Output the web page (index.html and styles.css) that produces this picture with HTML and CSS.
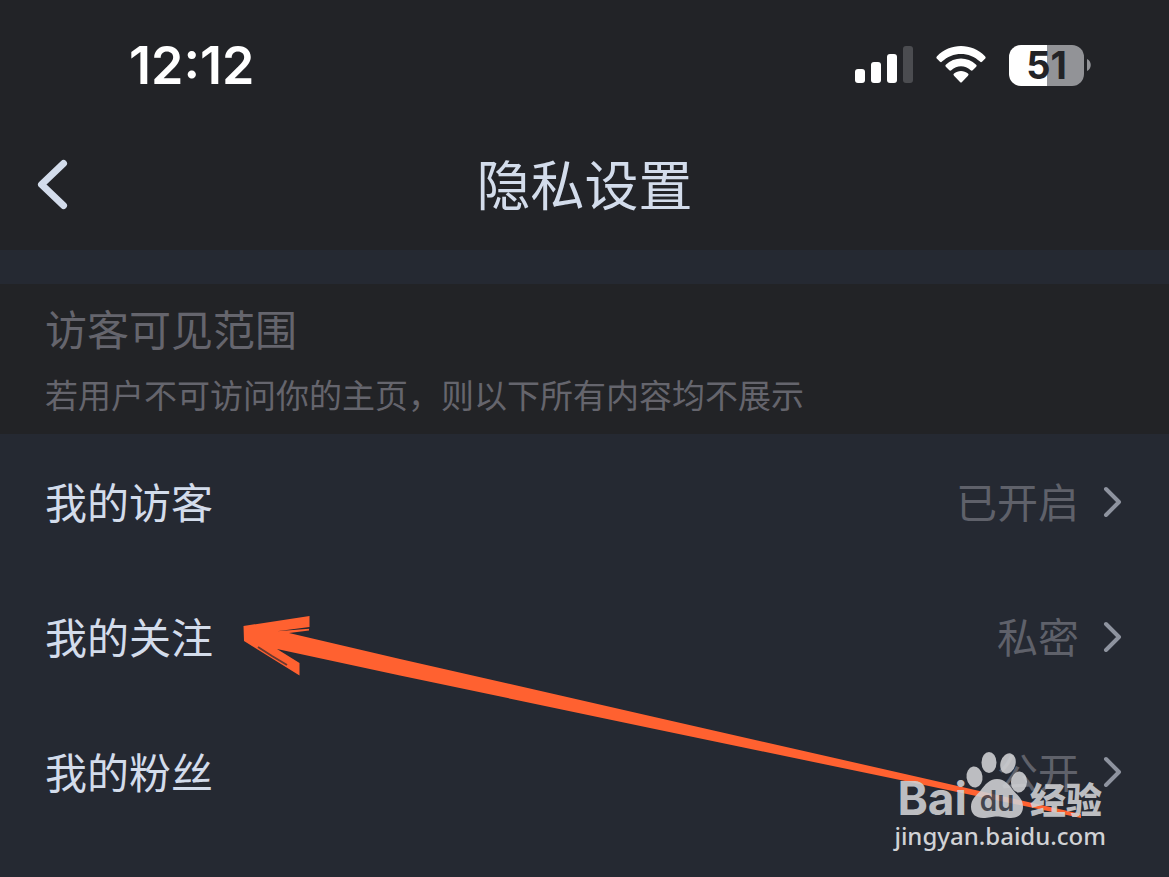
FILE: index.html
```html
<!DOCTYPE html>
<html lang="zh-CN">
<head>
<meta charset="utf-8">
<meta name="viewport" content="width=device-width, initial-scale=1">
<title>隐私设置</title>
<link rel="stylesheet" href="styles.css">
</head>
<body>
<div class="screen">
  <div class="status">
    <time class="clock">12:12</time>
    <div class="indicators">
      <svg class="signal" width="58" height="38" viewBox="0 0 58 38" role="img" aria-label="信号">
        <rect x="0" y="23" width="10" height="14" rx="3"/>
        <rect x="16" y="16" width="10" height="21" rx="3"/>
        <rect x="32" y="8" width="10" height="29" rx="3"/>
        <rect class="off" x="48" y="0" width="10" height="37" rx="3"/>
      </svg>
      <svg class="wifi" width="50" height="38" viewBox="0 0 50 38" role="img" aria-label="Wi-Fi">
        <path d="M1 10.2C14-3.3 36-3.3 49 10.2Q50.3 11.500 49 12.800L46 15.700Q45 16.600 44 15.600C33.500 5.300 16.500 5.300 6 15.600Q5 16.600 4 15.700L1 12.800Q-.3 11.500 1 10.200Z"/>
        <path d="M9.800 18.800C18.500 10.500 31.500 10.500 40.200 18.800Q41.200 19.800 40.200 20.800L36.700 24.200Q35.700 25.100 34.700 24.200C29 19 21 19 15.300 24.200Q14.300 25.100 13.300 24.200L9.800 20.800Q8.800 19.800 9.800 18.800Z"/>
        <path d="M18 27.500C22 24 28 24 32 27.500Q33.200 28.500 32 29.700L26 36Q25 37 24 36L18 29.700Q16.800 28.500 18 27.500Z"/>
      </svg>
      <div class="battery">
        <span class="level">51</span>
        <svg width="4" height="12" viewBox="0 0 4 12" aria-hidden="true"><path d="M0 0C5 2 5 10 0 12Z"/></svg>
      </div>
    </div>
  </div>

  <header class="nav">
    <button class="back" type="button" aria-label="返回">
      <svg width="32" height="52" viewBox="0 0 32 52" aria-hidden="true"><path d="M27.500 4.500 5.500 25.500 27.500 46.500"/></svg>
    </button>
    <h1 class="title">隐私设置</h1>
  </header>

  <main>
    <section class="intro">
      <h2 class="heading">访客可见范围</h2>
      <p class="note">若用户不可访问你的主页，则以下所有内容均不展示</p>
    </section>
    <div class="list">
      <button class="row" type="button">
        <span class="label">我的访客</span><span class="value">已开启</span>
        <svg class="chevron" width="20" height="32" viewBox="0 0 20 32" aria-hidden="true"><path d="M3 4 16 17 3 30"/></svg>
      </button>
      <button class="row" type="button">
        <span class="label">我的关注</span><span class="value">私密</span>
        <svg class="chevron" width="20" height="32" viewBox="0 0 20 32" aria-hidden="true"><path d="M3 4 16 17 3 30"/></svg>
      </button>
      <button class="row" type="button">
        <span class="label">我的粉丝</span><span class="value">公开</span>
        <svg class="chevron" width="20" height="32" viewBox="0 0 20 32" aria-hidden="true"><path d="M3 4 16 17 3 30"/></svg>
      </button>
      <svg class="pointer" width="840" height="206" viewBox="243 615 840 206" aria-hidden="true">
        <path d="M243.500 626 309.500 616V627L277 631.300 309 628.700V630.500L289 633 400 659 650 716 905 774 1081 814V818L905 781 650 728 400 675.500 277 649 299.500 663V675.500L244 641Z"/>
        <path class="scratch" d="M258 647 272 656 287 665"/>
      </svg>
    </div>
  </main>

  <div class="mark">
    <div class="brand">
      <span class="latin">Bai</span>
      <svg class="paw" width="60" height="66" viewBox="969 752 60 66" aria-hidden="true">
        <ellipse cx="976.500" cy="777" rx="8" ry="10.500" transform="rotate(-8 976.500 777)"/>
        <ellipse cx="991" cy="762.500" rx="7.500" ry="10.500"/>
        <ellipse cx="1010" cy="763.500" rx="7.500" ry="10.500" transform="rotate(16 1010 763.500)"/>
        <ellipse cx="1021" cy="782" rx="8" ry="10.500" transform="rotate(4 1021 782)"/>
        <path d="M999 779C1007 779 1011 785 1015 790C1020 796 1025 799 1025 807C1025 814 1020 818 1013 818C1007 818 1004 816.500 999 816.500C994 816.500 991 818 985 818C978 818 973 814 973 807C973 799 978 796 983 790C987 785 991 779 999 779Z"/>
        <text x="999" y="811" text-anchor="middle">du</text>
      </svg>
      <span class="han">经验</span>
    </div>
    <div class="site">jingyan.baidu.com</div>
  </div>
</div>
</body>
</html>
```
FILE: styles.css
```css
* { box-sizing: border-box; }

body {
  margin: 0;
  background: #252932;
  color: #d3dceb;
  font-family: "Noto Sans CJK SC", sans-serif;
  font-weight: 400;
}

button {
  border: 0;
  padding: 0;
  background: none;
  color: inherit;
  font: inherit;
  cursor: pointer;
}

h1, h2, p { margin: 0; font-weight: inherit; }

svg { display: block; flex: none; }

.screen {
  position: relative;
  min-height: 100vh;
}

.status {
  display: flex;
  align-items: center;
  justify-content: space-between;
  padding: 34px 78px 24px 129px;
  background: #222327;
  color: #fff;
  font-family: Inter, sans-serif;
}

.clock {
  padding-top: 2px;
  font-size: 52px;
  font-weight: 600;
  line-height: 60px;
}

.indicators {
  display: flex;
  align-items: center;
  gap: 23px;
  fill: #fff;
}

.off { fill: #4b4c50; }

.battery {
  display: flex;
  align-items: center;
  gap: 3px;
  fill: #929397;
}

.level {
  width: 75px;
  border-radius: 12px;
  background: linear-gradient(to right, #fff 51%, #929397 51%);
  color: #222327;
  font-size: 38px;
  font-weight: 700;
  line-height: 41px;
  text-align: center;
}

.nav {
  display: grid;
  grid-template-columns: 1fr auto 1fr;
  align-items: center;
  padding: 22px 36px 26px;
  background: #222327;
}

.back {
  justify-self: start;
  padding-top: 4px;
  fill: none;
  stroke: #d3dceb;
  stroke-width: 7;
  stroke-linecap: round;
  stroke-linejoin: round;
}

.title {
  font-size: 54px;
  line-height: 82px;
}

.intro {
  margin-top: 34px;
  padding: 14px 45px 16px;
  background: #222326;
  color: #65656d;
}

.heading {
  font-size: 42px;
  line-height: 60px;
}

.note {
  padding-top: 12px;
  font-size: 33px;
  line-height: 48px;
}

.list { position: relative; }

.row {
  display: flex;
  align-items: center;
  width: 100%;
  padding: 36px 46px 38px 45px;
  line-height: 61px;
  text-align: left;
}

.label {
  flex: 1;
  font-size: 42px;
}

.value {
  color: #5f616a;
  font-size: 41px;
}

.chevron {
  margin-left: 24px;
  fill: none;
  stroke: #8e939f;
  stroke-width: 4;
  stroke-linecap: round;
  stroke-linejoin: round;
}

.pointer {
  position: absolute;
  left: 243px;
  top: 181px;
  fill: #ff6130;
  pointer-events: none;
}

.scratch {
  fill: none;
  stroke: #6b3930;
  stroke-width: 2;
}

.mark {
  position: absolute;
  right: 63px;
  bottom: 23px;
  color: #d1d2d5;
  font-family: "Noto Sans", sans-serif;
  pointer-events: none;
}

.brand {
  display: flex;
  align-items: flex-end;
  padding-left: 3px;
  opacity: 0.88;
}

.latin {
  font-family: Inter, sans-serif;
  font-size: 46px;
  font-weight: 700;
  line-height: 40px;
}

.paw {
  overflow: visible;
  fill: #d1d2d5;
}

.paw text {
  fill: #484b53;
  font-family: Inter, sans-serif;
  font-size: 28px;
  font-weight: 600;
}

.han {
  margin-left: 3px;
  font-family: "Noto Sans CJK SC", sans-serif;
  font-size: 36px;
  font-weight: 900;
  line-height: 40px;
}

.site {
  font-size: 24px;
  font-weight: 500;
  line-height: 36px;
}
```
